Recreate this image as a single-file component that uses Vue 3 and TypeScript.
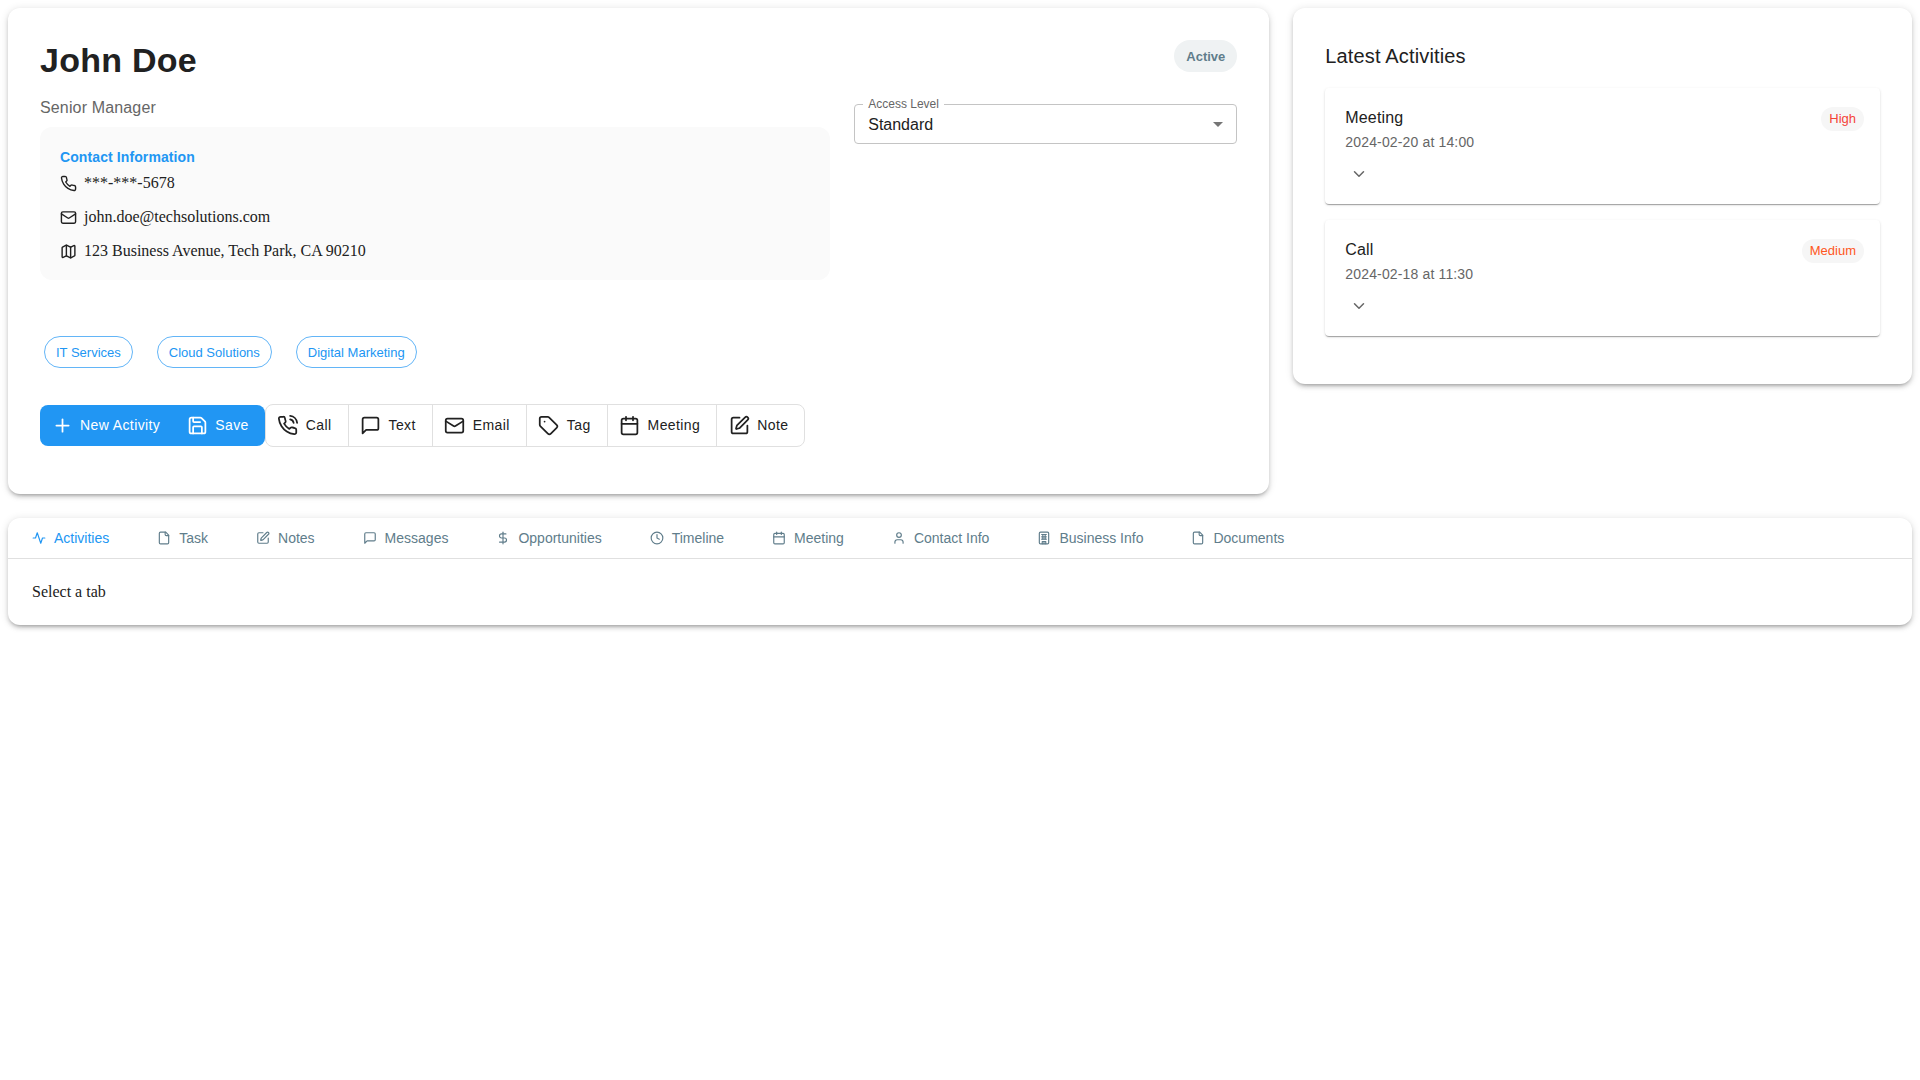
<script setup lang="ts">
import { h } from "vue";

const icons: Record<string, string[]> = {
  phone: [
    "M22 16.92v3a2 2 0 0 1-2.18 2 19.79 19.79 0 0 1-8.63-3.07 19.5 19.5 0 0 1-6-6 19.79 19.79 0 0 1-3.07-8.67A2 2 0 0 1 4.11 2h3a2 2 0 0 1 2 1.72 12.84 12.84 0 0 0 .7 2.81 2 2 0 0 1-.45 2.11L8.09 9.91a16 16 0 0 0 6 6l1.27-1.27a2 2 0 0 1 2.11-.45 12.84 12.84 0 0 0 2.81.7A2 2 0 0 1 22 16.92z",
  ],
  phoneCall: [
    "M22 16.92v3a2 2 0 0 1-2.18 2 19.79 19.79 0 0 1-8.63-3.07 19.5 19.5 0 0 1-6-6 19.79 19.79 0 0 1-3.07-8.67A2 2 0 0 1 4.11 2h3a2 2 0 0 1 2 1.72 12.84 12.84 0 0 0 .7 2.81 2 2 0 0 1-.45 2.11L8.09 9.91a16 16 0 0 0 6 6l1.27-1.27a2 2 0 0 1 2.11-.45 12.84 12.84 0 0 0 2.81.7A2 2 0 0 1 22 16.92z",
    "M15.05 5A5 5 0 0 1 19 8.95",
    "M15.05 1A9 9 0 0 1 23 8.94",
  ],
  mail: [
    "M4 4h16a2 2 0 0 1 2 2v12a2 2 0 0 1-2 2H4a2 2 0 0 1-2-2V6a2 2 0 0 1 2-2z",
    "m22 7-8.97 5.7a1.94 1.94 0 0 1-2.06 0L2 7",
  ],
  map: [
    "M14.106 5.553a2 2 0 0 0 1.788 0l3.659-1.83A1 1 0 0 1 21 4.619v12.764a1 1 0 0 1-.553.894l-4.553 2.277a2 2 0 0 1-1.788 0l-4.212-2.106a2 2 0 0 0-1.788 0l-3.659 1.83A1 1 0 0 1 3 19.381V6.618a1 1 0 0 1 .553-.894l4.553-2.277a2 2 0 0 1 1.788 0z",
    "M15 5.764v15",
    "M9 3.236v15",
  ],
  message: ["M21 15a2 2 0 0 1-2 2H7l-4 4V5a2 2 0 0 1 2-2h14a2 2 0 0 1 2 2z"],
  tag: [
    "M12.586 2.586A2 2 0 0 0 11.172 2H4a2 2 0 0 0-2 2v7.172a2 2 0 0 0 .586 1.414l8.704 8.704a2.426 2.426 0 0 0 3.42 0l6.58-6.58a2.426 2.426 0 0 0 0-3.42z",
    "M7.5 7.5h.01",
  ],
  calendar: [
    "M8 2v4",
    "M16 2v4",
    "M5 4h14a2 2 0 0 1 2 2v14a2 2 0 0 1-2 2H5a2 2 0 0 1-2-2V6a2 2 0 0 1 2-2z",
    "M3 10h18",
  ],
  pen: [
    "M12 3H5a2 2 0 0 0-2 2v14a2 2 0 0 0 2 2h14a2 2 0 0 0 2-2v-7",
    "M18.375 2.625a1 1 0 0 1 3 3l-9.013 9.014a2 2 0 0 1-.853.505l-2.873.84a.5.5 0 0 1-.62-.62l.84-2.873a2 2 0 0 1 .506-.852z",
  ],
  plus: ["M5 12h14", "M12 5v14"],
  save: [
    "M15.2 3a2 2 0 0 1 1.4.6l3.8 3.8a2 2 0 0 1 .6 1.4V19a2 2 0 0 1-2 2H5a2 2 0 0 1-2-2V5a2 2 0 0 1 2-2z",
    "M17 21v-7a1 1 0 0 0-1-1H8a1 1 0 0 0-1 1v7",
    "M7 3v4a1 1 0 0 0 1 1h7",
  ],
  activity: ["M22 12h-4l-3 9L9 3l-3 9H2"],
  file: [
    "M15 2H6a2 2 0 0 0-2 2v16a2 2 0 0 0 2 2h12a2 2 0 0 0 2-2V7Z",
    "M14 2v4a2 2 0 0 0 2 2h4",
  ],
  dollar: ["M12 2v20", "M17 5H9.5a3.5 3.5 0 0 0 0 7h5a3.5 3.5 0 0 1 0 7H6"],
  clock: ["M2 12a10 10 0 1 0 20 0a10 10 0 1 0-20 0", "M12 6v6l4 2"],
  user: [
    "M19 21v-2a4 4 0 0 0-4-4H9a4 4 0 0 0-4 4v2",
    "M8 7a4 4 0 1 0 8 0a4 4 0 1 0-8 0",
  ],
  building: [
    "M6 2h12a2 2 0 0 1 2 2v16a2 2 0 0 1-2 2H6a2 2 0 0 1-2-2V4a2 2 0 0 1 2-2z",
    "M9 22v-4h6v4",
    "M12 18v4",
    "M8 6h8",
    "M8 10h8",
    "M8 14h8",
    "M10 6v8",
    "M14 6v8",
  ],
  chevron: ["m6 9 6 6 6-6"],
};

const Icon = (props: { name: string; size: number }) =>
  h(
    "svg",
    {
      width: props.size,
      height: props.size,
      viewBox: "0 0 24 24",
      fill: "none",
      stroke: "currentColor",
      "stroke-width": 2,
      "stroke-linecap": "round",
      "stroke-linejoin": "round",
    },
    icons[props.name].map((d) => h("path", { d })),
  );
Icon.props = ["name", "size"];

const contacts = [
  { icon: "phone", text: "***-***-5678" },
  { icon: "mail", text: "john.doe@techsolutions.com" },
  { icon: "map", text: "123 Business Avenue, Tech Park, CA 90210" },
];

const services = ["IT Services", "Cloud Solutions", "Digital Marketing"];

const actions = [
  { icon: "phoneCall", label: "Call" },
  { icon: "message", label: "Text" },
  { icon: "mail", label: "Email" },
  { icon: "tag", label: "Tag" },
  { icon: "calendar", label: "Meeting" },
  { icon: "pen", label: "Note" },
];

const activities = [
  { title: "Meeting", when: "2024-02-20 at 14:00", priority: "High", level: "high" },
  { title: "Call", when: "2024-02-18 at 11:30", priority: "Medium", level: "medium" },
];

const tabs = [
  { icon: "activity", label: "Activities" },
  { icon: "file", label: "Task" },
  { icon: "pen", label: "Notes" },
  { icon: "message", label: "Messages" },
  { icon: "dollar", label: "Opportunities" },
  { icon: "clock", label: "Timeline" },
  { icon: "calendar", label: "Meeting" },
  { icon: "user", label: "Contact Info" },
  { icon: "building", label: "Business Info" },
  { icon: "file", label: "Documents" },
];
</script>

<template>
  <div class="page">
    <div class="top-row">
      <section class="card profile">
        <div class="profile-head">
          <h1 class="name">John Doe</h1>
          <span class="status">Active</span>
        </div>

        <div class="profile-grid">
          <div>
            <div class="role">Senior Manager</div>
            <div class="contact-box">
              <div class="contact-title">Contact Information</div>
              <div v-for="c in contacts" :key="c.icon" class="contact-row">
                <Icon :name="c.icon" :size="17" />
                <span>{{ c.text }}</span>
              </div>
            </div>
          </div>

          <div class="select">
            <span class="select-label">Access Level</span>
            <span class="select-value">Standard</span>
            <svg class="select-arrow" width="24" height="24" viewBox="0 0 24 24">
              <path d="M7 10l5 5 5-5z" fill="#757575" />
            </svg>
          </div>
        </div>

        <div class="services">
          <span v-for="s in services" :key="s" class="service">{{ s }}</span>
        </div>

        <div class="actions">
          <div class="primary-group">
            <button class="primary-btn">
              <Icon name="plus" :size="21" />
              New Activity
            </button>
            <button class="primary-btn">
              <Icon name="save" :size="21" />
              Save
            </button>
          </div>
          <div class="tool-group">
            <button v-for="a in actions" :key="a.label" class="tool-btn">
              <Icon :name="a.icon" :size="21" />
              {{ a.label }}
            </button>
          </div>
        </div>
      </section>

      <aside class="card latest">
        <h2 class="latest-title">Latest Activities</h2>
        <div v-for="a in activities" :key="a.title" class="activity">
          <div class="activity-head">
            <div>
              <div class="activity-title">{{ a.title }}</div>
              <div class="activity-when">{{ a.when }}</div>
            </div>
            <span :class="['priority', a.level]">{{ a.priority }}</span>
          </div>
          <button class="expand"><Icon name="chevron" :size="18" /></button>
        </div>
      </aside>
    </div>

    <section class="card tabs-card">
      <div class="tabs">
        <div
          v-for="(t, i) in tabs"
          :key="t.label"
          :class="['tab', { active: i === 0 }]"
        >
          <Icon :name="t.icon" :size="14" />
          {{ t.label }}
        </div>
      </div>
      <div class="tab-body">Select a tab</div>
    </section>
  </div>
</template>

<style>
body {
  background: #fff;
}
</style>

<style scoped>
.page {
  padding: 8px;
  font-family: "Liberation Sans", Arial, sans-serif;
  color: #212121;
}

.top-row {
  display: grid;
  grid-template-columns: calc((100% + 24px) * 2 / 3 - 24px) 1fr;
  gap: 24px;
  align-items: start;
  margin-bottom: 24px;
}

.card {
  background: #fff;
  border-radius: 12px;
  box-shadow:
    0 3px 3px -2px rgba(0, 0, 0, 0.2),
    0 3px 4px 0 rgba(0, 0, 0, 0.14),
    0 1px 8px 0 rgba(0, 0, 0, 0.12);
}

.profile {
  padding: 32px 32px 47px;
}

.profile-head {
  display: flex;
  justify-content: space-between;
  align-items: flex-start;
  margin-bottom: 16px;
}

.name {
  margin: 0;
  font-size: 34px;
  font-weight: 700;
  line-height: 40px;
  letter-spacing: 0.25px;
}

.status {
  height: 32px;
  line-height: 33px;
  padding: 0 12px;
  border-radius: 16px;
  background: #eff2f3;
  color: #607d8b;
  font-size: 13px;
  font-weight: 700;
}

.profile-grid {
  display: grid;
  grid-template-columns: calc((100% + 24px) * 2 / 3 - 24px) 1fr;
  gap: 24px;
  align-items: start;
}

.role {
  font-size: 16px;
  line-height: 24px;
  letter-spacing: 0.15px;
  color: #666;
  margin-bottom: 7px;
}

.contact-box {
  padding: 20px;
  border-radius: 12px;
  background: #fafafa;
}

.contact-title {
  font-size: 14px;
  font-weight: 700;
  line-height: 20px;
  letter-spacing: 0.1px;
  color: #2196f3;
  margin-bottom: 7px;
}

.contact-row {
  display: flex;
  align-items: center;
  gap: 8px;
  font-family: "Liberation Serif", "Times New Roman", serif;
  font-size: 16px;
  line-height: 18px;
}

.contact-row svg {
  margin: 0 -0.5px;
}

.contact-row + .contact-row {
  margin-top: 16px;
}

.select {
  position: relative;
  display: flex;
  align-items: center;
  box-sizing: border-box;
  height: 40px;
  margin-top: 8px;
  padding: 0 13px;
  border: 1px solid #c4c4c4;
  border-radius: 4px;
}

.select-label {
  position: absolute;
  top: -8px;
  left: 8px;
  padding: 0 5px;
  background: #fff;
  color: #666;
  font-size: 12px;
  line-height: 14px;
}

.select-value {
  margin-top: 2px;
  font-size: 16px;
}

.select-arrow {
  position: absolute;
  right: 6px;
  top: 7px;
}

.services {
  display: flex;
  gap: 24px;
  margin-top: 56px;
  padding-left: 4px;
}

.service {
  height: 32px;
  line-height: 31px;
  box-sizing: border-box;
  padding: 0 11px;
  border: 1px solid rgba(33, 150, 243, 0.7);
  border-radius: 16px;
  color: #2196f3;
  font-size: 13px;
}

.actions {
  display: flex;
  align-items: center;
  margin-top: 36px;
}

.primary-group {
  display: flex;
  border-radius: 8px;
  overflow: hidden;
  background: #2196f3;
}

.primary-btn,
.tool-btn {
  display: flex;
  align-items: center;
  gap: 8px;
  border: 0;
  background: transparent;
  font-family: inherit;
  font-size: 14px;
  font-weight: 400;
  line-height: 24.5px;
  letter-spacing: 0.4px;
  padding: 8px 16px 8px 12px;
  white-space: nowrap;
}

.primary-btn svg,
.tool-btn svg {
  margin: 0 -0.5px;
}

.primary-btn {
  color: #fff;
}

.primary-btn:first-child {
  padding-right: 15px;
}

.tool-group {
  display: flex;
  border: 1px solid #e0e0e0;
  border-radius: 8px;
}

.tool-btn {
  color: #212121;
}

.tool-btn + .tool-btn {
  border-left: 1px solid #e0e0e0;
}

.latest {
  padding: 32px;
}

.latest-title {
  margin: 0 0 16px;
  font-size: 20px;
  font-weight: 400;
  line-height: 32px;
  letter-spacing: 0.15px;
}

.activity {
  height: 116px;
  box-sizing: border-box;
  padding: 16px 16px 16px 20px;
  margin-bottom: 16px;
  border-radius: 4px;
  background: #fff;
  box-shadow:
    0 2px 1px -1px rgba(0, 0, 0, 0.2),
    0 1px 1px 0 rgba(0, 0, 0, 0.14),
    0 1px 3px 0 rgba(0, 0, 0, 0.12);
}

.activity-head {
  display: flex;
  justify-content: space-between;
  align-items: flex-start;
}

.activity-title {
  margin-top: 2px;
  font-size: 16px;
  line-height: 24px;
  letter-spacing: 0.15px;
}

.activity-when {
  margin-top: 2px;
  font-size: 14px;
  line-height: 20px;
  letter-spacing: 0.15px;
  color: #666;
}

.priority {
  height: 24px;
  line-height: 24px;
  margin-top: 3px;
  padding: 0 8px;
  border-radius: 12px;
  background: #f6f6f6;
  font-size: 13px;
}

.priority.high {
  color: #f44336;
}

.priority.medium {
  color: #ff5722;
}

.expand {
  display: flex;
  margin-top: 8px;
  padding: 5px;
  border: 0;
  background: transparent;
  color: #666;
}

.tabs {
  display: flex;
  border-bottom: 1px solid #e0e0e0;
}

.tab {
  display: flex;
  align-items: center;
  gap: 8px;
  height: 40px;
  padding: 0 24px;
  font-size: 14px;
  color: #607d8b;
  white-space: nowrap;
}

.tab.active {
  color: #2196f3;
}

.tab-body {
  padding: 24px;
  font-family: "Liberation Serif", "Times New Roman", serif;
  font-size: 16px;
  line-height: 18px;
}
</style>
